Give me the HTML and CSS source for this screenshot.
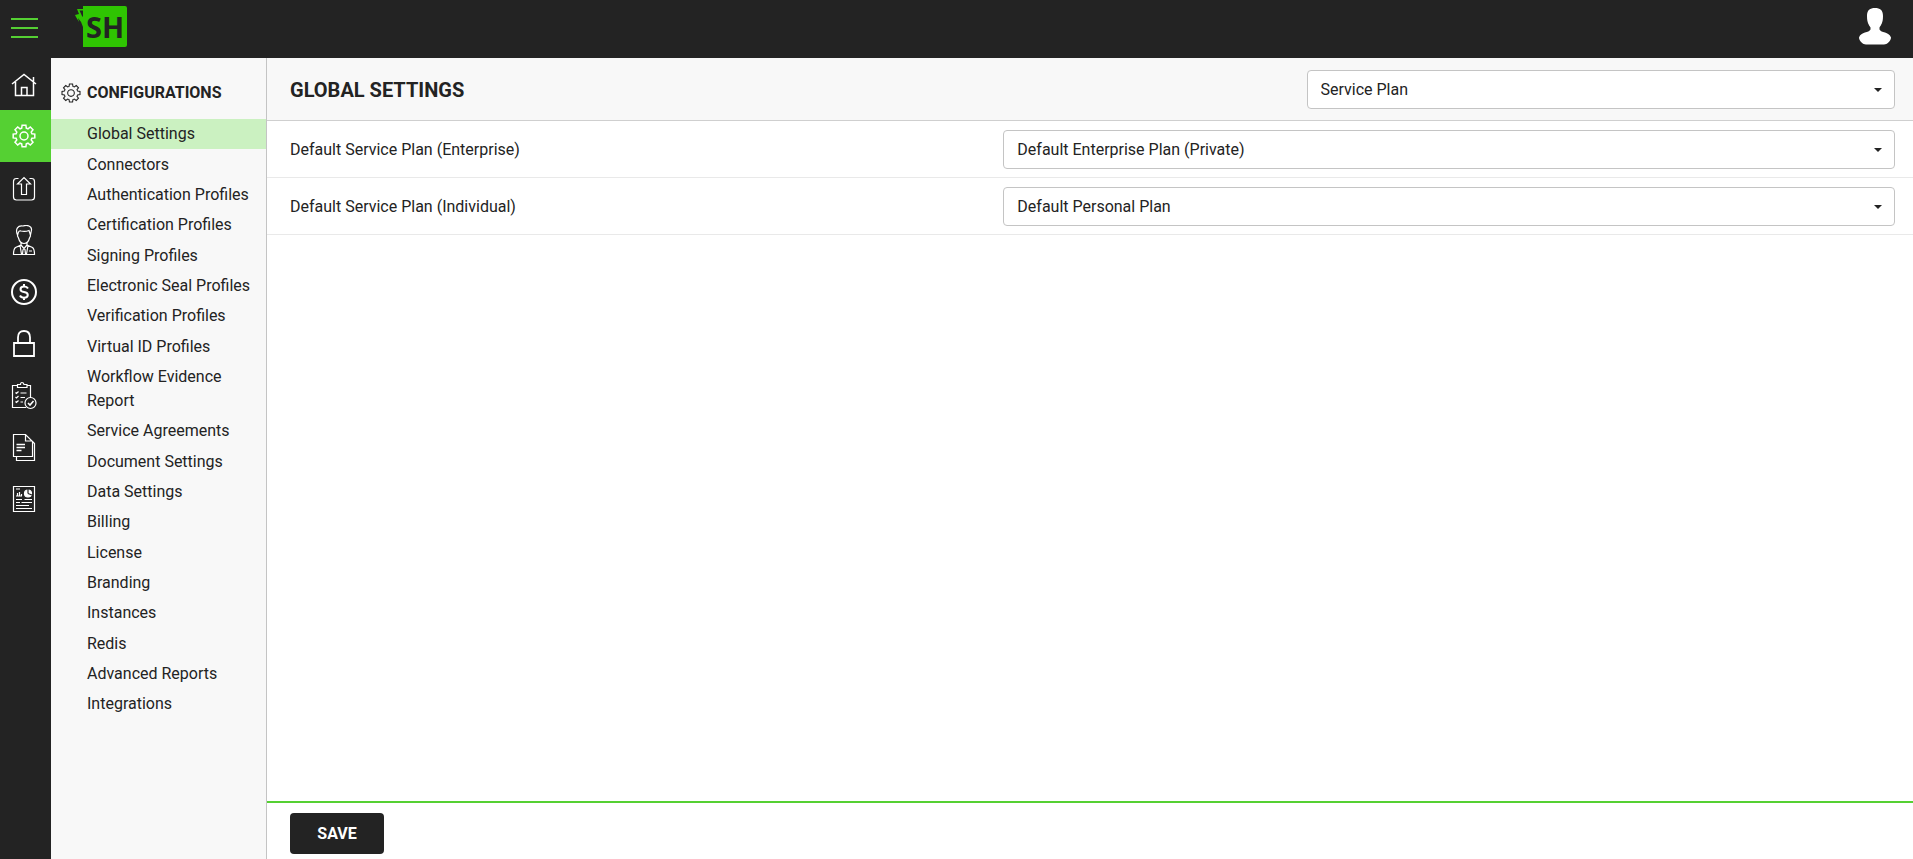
FILE: index.html
```html
<!DOCTYPE html>
<html lang="en">
<head>
  <meta charset="utf-8">
  <title>Global Settings</title>
  <link rel="stylesheet" href="styles.css">
</head>
<body>
  <svg width="0" height="0" class="defs" aria-hidden="true">
    <symbol id="gear" viewBox="-12 -12 24 24">
      <path d="M-2.3-7.9L-1.9-10.8H1.9L2.3-7.9L4-7.2L6.3-9L9-6.3L7.2-4L7.9-2.3L10.8-1.9V1.9L7.9 2.3L7.2 4L9 6.3L6.3 9L4 7.2L2.3 7.9L1.9 10.8H-1.9L-2.3 7.9L-4 7.2L-6.3 9L-9 6.3L-7.2 4L-7.9 2.3L-10.8 1.9V-1.9L-7.9-2.3L-7.2-4L-9-6.3L-6.3-9L-4-7.2Z"/>
      <circle r="4"/>
    </symbol>
  </svg>

  <header class="topbar">
    <button class="menu-toggle" aria-label="Toggle menu"><span></span><span></span><span></span></button>
    <a href="#" class="logo" aria-label="Home page">
      <svg width="54" height="42" viewBox="0 0 54 42">
        <path fill="#2fc402" d="M9 0H50Q52 0 52 2V39Q52 41 50 41H8V21Q7 16 3 12L4 16L1 11L0 9L4 8L2 3L8 3V4.500L4.500 4.500L7 10L8 11V0Z"/>
        <text x="11" y="32" class="logo-text">SH</text>
      </svg>
    </a>
    <button class="avatar" aria-label="Account">
      <svg width="32" height="38" viewBox="0 0 32 38">
        <path fill="#fff" d="M16 0C21 0 24 2 24 8C24 15 22 17 20.500 19.500V21.500C22 25 30 23.500 32 29.500C32 33 28 36.500 25 36.500H7C4 36.500 0 33 0 29.500C2 23.500 10 25 11.500 21.500V19.500C10 17 8 15 8 8C8 2 11 0 16 0Z"/>
      </svg>
    </button>
  </header>

  <div class="layout">
    <nav class="rail" aria-label="Main">
      <a href="#" aria-label="Home">
        <svg class="icon" viewBox="0 0 30 30"><path stroke-width="1.500" d="M3 15L15 5.500L27 15M6.500 13V26.500H24.500V13M12.500 26V18.500H18V26M24.500 12.500V8"/></svg>
      </a>
      <a href="#" class="active" aria-label="Configurations">
        <svg class="icon icon-gear"><use href="#gear"/></svg>
      </a>
      <a href="#" aria-label="Uploads">
        <svg class="icon" viewBox="0 0 30 30"><path d="M9.500 5.500H7.500Q4.500 5.500 4.500 8.500V24Q4.500 27 7.500 27H22.500Q25.500 27 25.500 24V8.500Q25.500 5.500 22.500 5.500H20.500M12.500 21.500V11H8.500L15 4.500L21.500 11H17.500V21.500Z"/></svg>
      </a>
      <a href="#" aria-label="Accounts">
        <svg class="icon" viewBox="0 0 30 30"><path d="M8.500 10C6 4 9 0 14 1C18 -.500 23 1 22.500 5L21.500 10M9 8.500L8.500 11L9.500 13C10.500 17 13 18.500 15 18.500S19.500 17 20.500 13L21.500 11L21 8.500M9 8.500Q10 5 12 6Q16 7 20 5.500L21 8.500M12 17.500V20L6.500 22.500Q4.500 24 4.500 29.500H25.500Q25.500 24 23.500 22.500L18 20V17.500M12 20L15 23.500L18 20M11 20.500L12.500 29M19 20.500L17.500 29M14 24.500L15 23.500L16 24.500L16.500 29M14 24.500L13.500 29M20 26H23"/></svg>
      </a>
      <a href="#" aria-label="Billing">
        <svg class="icon" viewBox="0 0 30 30"><circle cx="15" cy="15" r="12" stroke-width="2"/><path stroke-width="2" d="M19 11.500Q18 9.500 15 9.500Q11.500 9.500 11.500 12.200Q11.500 14.500 15 15Q18.800 15.500 18.800 18Q18.800 20.700 15 20.700Q12 20.700 11 18.500M15 7V9.500M15 20.500V23"/></svg>
      </a>
      <a href="#" aria-label="Access control">
        <svg class="icon" viewBox="0 0 30 30"><path stroke-width="1.800" d="M5 14H25V27H5ZM9 14V8.500Q9 2 15 2T21 8.500V14"/></svg>
      </a>
      <a href="#" aria-label="Approvals">
        <svg class="icon" viewBox="0 0 30 30"><path d="M8.500 4.500H3.500V26.500H17M18 4.500H21.500V17M8.500 6.500V3.500H11.500Q11.500 1.500 13 1.500T15 3.500H18V6.500ZM6.500 11.500L7.500 12.500L9.500 10.500M11.500 12H17.500M6.500 16L7.500 17L9.500 15M11.500 16.500H16M6.500 20.500L7.500 21.500L9.500 19.500M11.500 21H14"/><circle cx="21.500" cy="22" r="5.500"/><path stroke-width="1.600" d="M19 22L21 24L24.500 20"/></svg>
      </a>
      <a href="#" aria-label="Documents">
        <svg class="icon" viewBox="0 0 30 30"><path d="M4.500 1.500H16.500L23.500 8.500V23.500H4.500ZM16.500 1.500V8H23M7.500 24V27.500H25.500V10.500L23.500 8.500"/><path stroke-width="1.500" d="M7.500 11.500H16M7.500 14.500H16M7.500 17.500H12.500"/></svg>
      </a>
      <a href="#" aria-label="Reports">
        <svg class="icon" viewBox="0 0 30 30"><path d="M4.500 1.500H25.500V26.500H4.500ZM7 4H11M8.500 11V8M10.500 11V7M12.500 11V9M7 11H13M7 14.500H13M15.500 14.500H23M7 17.500H11M12.500 17.500H23M7 20.500H20M7 23.500H23"/><circle cx="19" cy="8.500" r="3.500" class="filled"/><path class="cut" d="M19 8.500V4M19 8.500L23 10"/></svg>
      </a>
    </nav>

    <aside class="sidebar">
      <h2 class="sidebar-title"><svg class="title-icon"><use href="#gear"/></svg>CONFIGURATIONS</h2>
      <ul class="side-menu">
        <li><a href="#" class="active">Global Settings</a></li>
        <li><a href="#">Connectors</a></li>
        <li><a href="#">Authentication Profiles</a></li>
        <li><a href="#">Certification Profiles</a></li>
        <li><a href="#">Signing Profiles</a></li>
        <li><a href="#">Electronic Seal Profiles</a></li>
        <li><a href="#">Verification Profiles</a></li>
        <li><a href="#">Virtual ID Profiles</a></li>
        <li><a href="#">Workflow Evidence Report</a></li>
        <li><a href="#">Service Agreements</a></li>
        <li><a href="#">Document Settings</a></li>
        <li><a href="#">Data Settings</a></li>
        <li><a href="#">Billing</a></li>
        <li><a href="#">License</a></li>
        <li><a href="#">Branding</a></li>
        <li><a href="#">Instances</a></li>
        <li><a href="#">Redis</a></li>
        <li><a href="#">Advanced Reports</a></li>
        <li><a href="#">Integrations</a></li>
      </ul>
    </aside>

    <main class="content">
      <div class="page-header">
        <h1>GLOBAL SETTINGS</h1>
        <div class="select">
          <select aria-label="Settings section"><option>Service Plan</option></select>
        </div>
      </div>

      <form class="settings">
        <div class="row">
          <label for="enterprise-plan">Default Service Plan (Enterprise)</label>
          <div class="select">
            <select id="enterprise-plan"><option>Default Enterprise Plan (Private)</option></select>
          </div>
        </div>
        <div class="row">
          <label for="individual-plan">Default Service Plan (Individual)</label>
          <div class="select">
            <select id="individual-plan"><option>Default Personal Plan</option></select>
          </div>
        </div>
      </form>

      <div class="actions">
        <button class="save">SAVE</button>
      </div>
    </main>
  </div>
</body>
</html>
```

FILE: styles.css
```css
* {
  box-sizing: border-box;
}

body {
  margin: 0;
  min-height: 100vh;
  display: flex;
  flex-direction: column;
  font-family: Roboto, sans-serif;
  font-size: 16px;
  line-height: 24px;
  color: #232323;
  background: #fff;
}

a {
  color: inherit;
  text-decoration: none;
}

button {
  border: none;
  padding: 0;
  background: none;
  font: inherit;
  cursor: pointer;
}

.defs {
  position: absolute;
}

/* Top bar */
.topbar {
  display: flex;
  align-items: flex-start;
  height: 58px;
  padding: 6px 22px 0 11px;
  background: #232323;
}

.menu-toggle {
  display: flex;
  flex-direction: column;
  gap: 7px;
  width: 27px;
  padding-top: 12px;
}

.menu-toggle span {
  height: 2px;
  background: #55d033;
}

.logo {
  margin-left: 37px;
}

.logo svg,
.avatar svg {
  display: block;
}

.logo-text {
  font-family: "Open Sans", sans-serif;
  font-size: 29px;
  font-weight: 700;
  fill: #232323;
}

.avatar {
  margin-left: auto;
  padding-top: 2px;
}

/* Page columns */
.layout {
  flex: 1;
  display: flex;
}

.rail {
  flex: none;
  width: 51px;
  background: #232323;
}

.rail a {
  display: flex;
  align-items: center;
  justify-content: center;
  height: 52px;
  padding-right: 3px;
}

.rail .active {
  background: #55d033;
}

.icon {
  width: 30px;
  height: 30px;
  fill: none;
  stroke: #fff;
  stroke-width: 1.2;
}

.icon-gear {
  width: 24px;
  height: 24px;
  stroke-width: 1.5;
}

.icon .filled {
  fill: #fff;
}

.icon .cut {
  stroke: #232323;
}

/* Sidebar */
.sidebar {
  flex: none;
  width: 216px;
  border-right: 1px solid #c4c4c4;
  background: #f8f8f8;
}

.sidebar-title {
  display: flex;
  align-items: center;
  gap: 6px;
  margin: 0;
  padding: 23px 10px 14px;
  font-size: 16px;
  font-weight: 700;
}

.title-icon {
  width: 20px;
  height: 20px;
  fill: none;
  stroke: #232323;
  stroke-width: 1.3;
}

.side-menu {
  margin: 0;
  padding: 0;
  list-style: none;
}

.side-menu li:nth-child(3n+1) {
  margin-bottom: 1px;
}

.side-menu a {
  display: block;
  padding: 3px 15px 3px 36px;
}

.side-menu .active {
  background: #cbf1c1;
}

/* Content */
.content {
  flex: 1;
  display: flex;
  flex-direction: column;
}

.page-header {
  display: grid;
  grid-template-columns: 19fr 11fr;
  align-items: center;
  padding: 12px 18px 11px 23px;
  border-bottom: 1px solid #cfcfcf;
  background: #f8f8f8;
}

.page-header h1 {
  margin: 0;
  font-size: 20px;
  font-weight: 700;
}

.settings {
  flex: 1;
}

.row {
  display: grid;
  grid-template-columns: 4fr 5fr;
  align-items: center;
  padding: 9px 18px 8px 23px;
  border-bottom: 1px solid #e9e9e9;
}

.select {
  position: relative;
}

.select::after {
  content: "";
  position: absolute;
  top: 18px;
  right: 13px;
  border: 4px solid transparent;
  border-top-color: #232323;
  border-bottom: none;
  pointer-events: none;
}

.select select {
  display: block;
  width: 100%;
  height: 39px;
  padding: 0 32px 0 13px;
  border: 1px solid #c4c4c4;
  border-radius: 4px;
  background: #fff;
  color: inherit;
  font: inherit;
  appearance: none;
}

.actions {
  padding: 10px 23px 5px;
  border-top: 2px solid #55d033;
}

.save {
  display: block;
  width: 94px;
  height: 41px;
  border-radius: 4px;
  background: #232323;
  color: #fff;
  font-weight: 700;
}
```
